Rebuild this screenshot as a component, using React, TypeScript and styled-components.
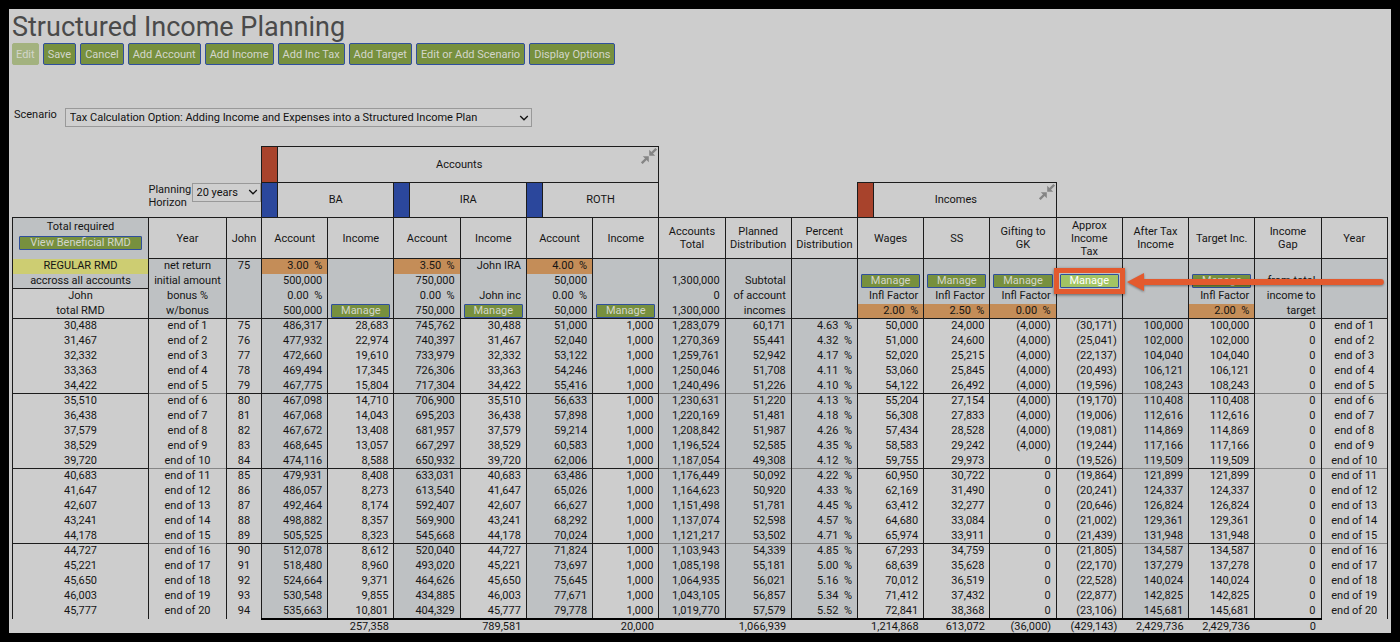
import React from "react";
import styled, { createGlobalStyle } from "styled-components";

const Global = createGlobalStyle`
  * { box-sizing: border-box; }
  body { margin: 0; background: #000; color: #151515; font-family: Roboto, "Liberation Sans", sans-serif; font-size: 11px; line-height: 14px; }
  button, select { font-family: inherit; font-size: inherit; }
`;

const ink = "#1c1c1c";
const shade = "#bec1c3";

const Page = styled.main`
  margin: 9px;
  min-height: calc(100vh - 18px);
  padding: 2px 3px 0;
  background: #cdcdcd;
`;

const Title = styled.h1`
  margin: 0;
  font-size: 27px;
  line-height: 32px;
  font-weight: 400;
  color: #4a4a4a;
`;

const Toolbar = styled.div`
  display: flex;
  gap: 4px;
  margin-bottom: 43px;
`;

const ToolButton = styled.button<{ $faded?: boolean }>`
  height: 22px;
  padding: 0 ${(p) => (p.$faded ? 3 : 4)}px;
  border: 1px solid ${(p) => (p.$faded ? "#a3b27f" : "#2f4f9c")};
  border-radius: 2px;
  background: ${(p) => (p.$faded ? "#a3b27f" : "#77903e")};
  color: #d3d6cb;
  white-space: nowrap;
`;

const ScenarioBar = styled.div`
  display: flex;
  gap: 8px;
  padding-left: 2px;
  margin-bottom: 19px;
`;

const PickerWrap = styled.span<{ $width: number }>`
  display: grid;
  flex: none;
  width: ${(p) => p.$width}px;
  align-items: center;
  > * { grid-area: 1 / 1; }
  svg { justify-self: end; margin-right: 3px; pointer-events: none; }
`;

const Picker = styled.select`
  appearance: none;
  width: 100%;
  height: 19px;
  padding: 0 4px;
  border: 1px solid #999;
  border-radius: 0;
  background: #cfcfcf;
  color: #111;
`;

const Horizon = styled.div`
  display: flex;
  align-items: flex-start;
  line-height: 13px;
  label { width: 43px; }
`;

const Sheet = styled.table`
  width: 100%;
  table-layout: fixed;
  border-collapse: collapse;
`;

const Blank = styled.td`
  padding: 0;
  vertical-align: top;
`;

const GroupCell = styled.th`
  padding: 0;
  border: 1px solid ${ink};
  font-weight: 400;
`;

const GroupInner = styled.div<{ $height: number }>`
  display: flex;
  height: ${(p) => p.$height}px;
`;

const Flag = styled.span<{ $color: string }>`
  width: 16px;
  background: ${(p) => p.$color};
  border-right: 1px solid ${ink};
`;

const GroupName = styled.span`
  flex: 1;
  align-self: center;
`;

const CollapseButton = styled.button`
  width: 18px;
  height: 18px;
  padding: 1px;
  border: 0;
  background: none;
  color: #858585;
  svg { display: block; }
`;

const HeadCell = styled.th<{ $shaded?: boolean }>`
  height: 41px;
  padding: ${(p) => (p.$shaded ? 2 : 0)}px 2px 0;
  border: 1px solid ${ink};
  border-bottom-width: ${(p) => (p.$shaded ? 0 : 1)}px;
  background: ${(p) => (p.$shaded ? shade : "none")};
  vertical-align: ${(p) => (p.$shaded ? "top" : "middle")};
  font-weight: 400;
  line-height: 13px;
  white-space: pre-line;
`;

type Tone = "shade" | "orange" | "yellow" | "none";
const tones: Record<Tone, string> = {
  shade,
  orange: "#c48d58",
  yellow: "#cdcd72",
  none: "transparent",
};

const Cell = styled.td<{ $tone?: Tone; $align?: string; $top?: string }>`
  position: relative;
  height: 15px;
  padding: 0 5px;
  border-left: 1px solid ${ink};
  border-right: 1px solid ${ink};
  border-top: ${(p) => (p.$top ? `1px solid ${p.$top}` : "0")};
  background: ${(p) => tones[p.$tone ?? "none"]};
  text-align: ${(p) => p.$align ?? "right"};
  white-space: nowrap;
`;

const TotalCell = styled.td<{ $rule: boolean }>`
  height: 14px;
  padding: 0 5px;
  border-top: ${(p) => (p.$rule ? "2px solid #000" : "0")};
  line-height: 13px;
  text-align: right;
`;

const SmallButton = styled.button<{ $bright?: boolean }>`
  display: block;
  width: 100%;
  height: 14px;
  padding: 0;
  border: 1px solid #2f4f9c;
  border-radius: 1px;
  background: ${(p) => (p.$bright ? "#a2c463" : "#77903e")};
  color: ${(p) => (p.$bright ? "#fff" : "#d3d6cb")};
  line-height: 12px;
`;

const ButtonSlot = styled.div`
  margin: 0 -2px;
`;

const RmdSlot = styled.div`
  margin: 3px 4px 0;
`;

const Highlight = styled.span`
  position: absolute;
  inset: -6px -3px -5px;
  border: 5px solid #e35a2e;
  box-shadow: 0 1px 3px rgba(0, 0, 0, 0.5);
  z-index: 2;
  pointer-events: none;
`;

const Arrow = styled.svg`
  position: absolute;
  left: calc(100% + 5px);
  top: -2px;
  width: calc(400% - 7px);
  height: 20px;
  overflow: visible;
  z-index: 2;
  pointer-events: none;
  filter: drop-shadow(0 1px 1px rgba(0, 0, 0, 0.4));
`;

const Chevron = () => (
  <svg width="10" height="10" viewBox="0 0 10 10" fill="none" stroke="#111" strokeWidth="1.3">
    <path d="M1.2 3 5 6.8 8.8 3" />
  </svg>
);

const CollapseIcon = () => (
  <svg width="16" height="16" viewBox="0 0 16 16" fill="currentColor" stroke="currentColor">
    <path stroke="none" d="M8.2 1.8v6h6zM7.8 14.2v-6h-6z" />
    <path strokeWidth="2.4" d="M10 6 15.2.8M6 10 .8 15.2" />
  </svg>
);

const accountNames = ["BA", "IRA", "ROTH"];
const headings = [
  "Account", "Income", "Account", "Income", "Account", "Income", "Accounts\nTotal",
  "Planned\nDistribution", "Percent\nDistribution", "Wages", "SS", "Gifting to\nGK",
  "Approx\nIncome\nTax", "After Tax\nIncome", "Target Inc.", "Income\nGap", "Year",
];

const rows = `30,488|486,317|28,683|745,762|51,000|1,283,079|60,171|4.63|50,000|24,000|(4,000)|(30,171)|100,000|100,000
31,467|477,932|22,974|740,397|52,040|1,270,369|55,441|4.32|51,000|24,600|(4,000)|(25,041)|102,000|102,000
32,332|472,660|19,610|733,979|53,122|1,259,761|52,942|4.17|52,020|25,215|(4,000)|(22,137)|104,040|104,040
33,363|469,494|17,345|726,306|54,246|1,250,046|51,708|4.11|53,060|25,845|(4,000)|(20,493)|106,121|106,121
34,422|467,775|15,804|717,304|55,416|1,240,496|51,226|4.10|54,122|26,492|(4,000)|(19,596)|108,243|108,243
35,510|467,098|14,710|706,900|56,633|1,230,631|51,220|4.13|55,204|27,154|(4,000)|(19,170)|110,408|110,408
36,438|467,068|14,043|695,203|57,898|1,220,169|51,481|4.18|56,308|27,833|(4,000)|(19,006)|112,616|112,616
37,579|467,672|13,408|681,957|59,214|1,208,842|51,987|4.26|57,434|28,528|(4,000)|(19,081)|114,869|114,869
38,529|468,645|13,057|667,297|60,583|1,196,524|52,585|4.35|58,583|29,242|(4,000)|(19,244)|117,166|117,166
39,720|474,116|8,588|650,932|62,006|1,187,054|49,308|4.12|59,755|29,973|0|(19,526)|119,509|119,509
40,683|479,931|8,408|633,031|63,486|1,176,449|50,092|4.22|60,950|30,722|0|(19,864)|121,899|121,899
41,647|486,057|8,273|613,540|65,026|1,164,623|50,920|4.33|62,169|31,490|0|(20,241)|124,337|124,337
42,607|492,464|8,174|592,407|66,627|1,151,498|51,781|4.45|63,412|32,277|0|(20,646)|126,824|126,824
43,241|498,882|8,357|569,900|68,292|1,137,074|52,598|4.57|64,680|33,084|0|(21,002)|129,361|129,361
44,178|505,525|8,323|545,668|70,024|1,121,217|53,502|4.71|65,974|33,911|0|(21,439)|131,948|131,948
44,727|512,078|8,612|520,040|71,824|1,103,943|54,339|4.85|67,293|34,759|0|(21,805)|134,587|134,587
45,221|518,480|8,960|493,020|73,697|1,085,198|55,181|5.00|68,639|35,628|0|(22,170)|137,279|137,278
45,650|524,664|9,371|464,626|75,645|1,064,935|56,021|5.16|70,012|36,519|0|(22,528)|140,024|140,024
46,003|530,548|9,855|434,885|77,671|1,043,105|56,857|5.34|71,412|37,432|0|(22,877)|142,825|142,825
45,777|535,663|10,801|404,329|79,778|1,019,770|57,579|5.52|72,841|38,368|0|(23,106)|145,681|145,681`
  .split("\n")
  .map((line, i) => {
    const [rmd, ba, baInc, ira, roth, total, plan, share, wages, ss, gift, tax, after, target] = line.split("|");
    return [rmd, `end of ${i + 1}`, String(75 + i), ba, baInc, ira, rmd, roth, "1,000", total, plan,
      `${share}\u00a0\u00a0%`, wages, ss, gift, tax, after, target, "0", `end of ${i + 1}`];
  });

const centered = new Set([0, 1, 2, 19]);
const shadedColumns = new Set([3, 5, 7, 9, 10, 11, 16]);
const faintRuleColumns = new Set([1, 9, 10, 11, 16, 18, 19]);

const totals = ["", "", "", "", "257,358", "", "789,581", "", "20,000", "", "1,066,939", "", "1,214,868",
  "613,072", "(36,000)", "(429,143)", "2,429,736", "2,429,736", "0", ""];

const pct = (n: string) => `${n}\u00a0\u00a0%`;
const M = "manage";
const setupRows: string[][] = [
  ["REGULAR RMD", "net return", "75", pct("3.00"), "", pct("3.50"), "John IRA", pct("4.00"), "", "", "", "", "", "", "", "", "", "", "", ""],
  ["accross all accounts", "initial amount", "", "500,000", "", "750,000", "", "50,000", "", "1,300,000", "Subtotal", "", M, M, M, M, "", M, "from total", ""],
  ["John", "bonus %", "", pct("0.00"), "", pct("0.00"), "John inc", pct("0.00"), "", "0", "of account", "", "Infl Factor", "Infl Factor", "Infl Factor", "", "", "Infl Factor", "income to", ""],
  ["total RMD", "w/bonus", "", "500,000", M, "750,000", M, "50,000", M, "1,300,000", "incomes", "", pct("2.00"), pct("2.50"), pct("0.00"), "", "", pct("2.00"), "target", ""],
];

const setupTone = (r: number, c: number): Tone => {
  if (c === 0) return r === 0 ? "yellow" : r === 1 ? "shade" : "none";
  if (r === 0 && [3, 5, 7].includes(c)) return "orange";
  if (r === 3 && [12, 13, 14, 17].includes(c)) return "orange";
  return "shade";
};

const Manage = ({ bright }: { bright?: boolean }) => (
  <>
    <ButtonSlot>
      <SmallButton type="button" $bright={bright}>Manage</SmallButton>
    </ButtonSlot>
    {bright && (
      <>
        <Highlight />
        <Arrow>
          <line x1="12" y1="10" x2="100%" y2="10" stroke="#e35a2e" strokeWidth="6" strokeLinecap="round" />
          <path d="M0 10 17 1v18z" fill="#e35a2e" />
        </Arrow>
      </>
    )}
  </>
);

export default function App() {
  return (
    <Page>
      <Global />
      <Title>Structured Income Planning</Title>
      <Toolbar>
        <ToolButton type="button" $faded>Edit</ToolButton>
        {["Save", "Cancel", "Add Account", "Add Income", "Add Inc Tax", "Add Target", "Edit or Add Scenario", "Display Options"].map((t) => (
          <ToolButton type="button" key={t}>{t}</ToolButton>
        ))}
      </Toolbar>
      <ScenarioBar>
        <label htmlFor="scenario">Scenario</label>
        <PickerWrap $width={467}>
          <Picker id="scenario">
            <option>Tax Calculation Option: Adding Income and Expenses into a Structured Income Plan</option>
          </Picker>
          <Chevron />
        </PickerWrap>
      </ScenarioBar>
      <Sheet>
        <colgroup>
          <col style={{ width: 136 }} />
          <col style={{ width: 78 }} />
          <col style={{ width: 35 }} />
          {headings.map((_, i) => <col key={i} />)}
        </colgroup>
        <thead>
          <tr>
            <Blank colSpan={3} />
            <GroupCell colSpan={6} scope="colgroup">
              <GroupInner $height={35}>
                <Flag $color="#a8432c" />
                <GroupName>Accounts</GroupName>
                <CollapseButton type="button" aria-label="Collapse accounts"><CollapseIcon /></CollapseButton>
              </GroupInner>
            </GroupCell>
            <Blank colSpan={11} />
          </tr>
          <tr>
            <Blank />
            <Blank colSpan={2}>
              <Horizon>
                <label htmlFor="horizon">Planning Horizon</label>
                <PickerWrap $width={69}>
                  <Picker id="horizon"><option>20 years</option></Picker>
                  <Chevron />
                </PickerWrap>
              </Horizon>
            </Blank>
            {accountNames.map((name) => (
              <GroupCell key={name} colSpan={2} scope="colgroup">
                <GroupInner $height={34}>
                  <Flag $color="#2b479c" />
                  <GroupName>{name}</GroupName>
                </GroupInner>
              </GroupCell>
            ))}
            <Blank colSpan={3} />
            <GroupCell colSpan={3} scope="colgroup">
              <GroupInner $height={34}>
                <Flag $color="#a8432c" />
                <GroupName>Incomes</GroupName>
                <CollapseButton type="button" aria-label="Collapse incomes"><CollapseIcon /></CollapseButton>
              </GroupInner>
            </GroupCell>
            <Blank colSpan={5} />
          </tr>
          <tr>
            <HeadCell $shaded>
              Total required
              <RmdSlot><SmallButton type="button">View Beneficial RMD</SmallButton></RmdSlot>
            </HeadCell>
            <HeadCell>Year</HeadCell>
            <HeadCell>John</HeadCell>
            {headings.map((h, i) => <HeadCell key={i}>{h}</HeadCell>)}
          </tr>
        </thead>
        <tbody>
          {setupRows.map((cells, r) => (
            <tr key={r}>
              {cells.map((text, c) => (
                <Cell key={c} $tone={setupTone(r, c)} $align={centered.has(c) ? "center" : "right"} $top={r === 2 && c === 0 ? ink : undefined}>
                  {text === M ? <Manage bright={c === 15} /> : text}
                </Cell>
              ))}
            </tr>
          ))}
          {rows.map((cells, r) => (
            <tr key={r}>
              {cells.map((text, c) => (
                <Cell
                  key={c}
                  $tone={shadedColumns.has(c) ? "shade" : "none"}
                  $align={centered.has(c) ? "center" : "right"}
                  $top={r % 5 ? undefined : r > 0 && faintRuleColumns.has(c) ? "#868686" : ink}
                >
                  {text}
                </Cell>
              ))}
            </tr>
          ))}
        </tbody>
        <tfoot>
          <tr>
            {totals.map((text, c) => <TotalCell key={c} $rule={c > 2 && c < 19}>{text}</TotalCell>)}
          </tr>
        </tfoot>
      </Sheet>
    </Page>
  );
}
